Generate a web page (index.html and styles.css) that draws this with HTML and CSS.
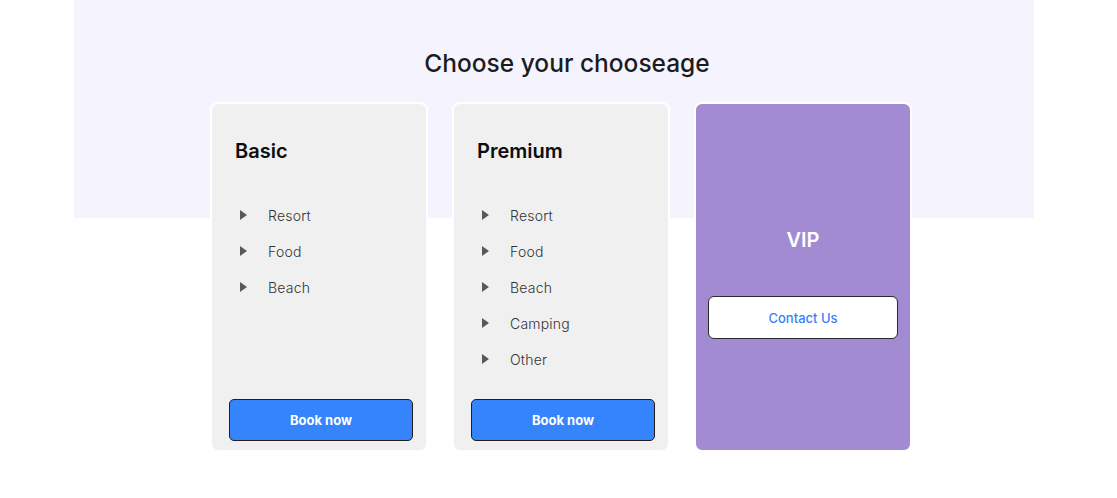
FILE: index.html
```html
<!DOCTYPE html>
<html lang="en">
<head>
<meta charset="utf-8">
<title>Choose your chooseage</title>
<link rel="stylesheet" href="styles.css">
</head>
<body>
<main class="pricing">
  <h2 class="pricing-title">Choose your chooseage</h2>
  <div class="cards">
    <section class="card">
      <h3 class="card-title">Basic</h3>
      <ul class="features">
        <li class="feature"><span class="tri"></span>Resort</li>
        <li class="feature"><span class="tri"></span>Food</li>
        <li class="feature"><span class="tri"></span>Beach</li>
      </ul>
      <button class="btn-book">Book now</button>
    </section>
    <section class="card">
      <h3 class="card-title">Premium</h3>
      <ul class="features">
        <li class="feature"><span class="tri"></span>Resort</li>
        <li class="feature"><span class="tri"></span>Food</li>
        <li class="feature"><span class="tri"></span>Beach</li>
        <li class="feature"><span class="tri"></span>Camping</li>
        <li class="feature"><span class="tri"></span>Other</li>
      </ul>
      <button class="btn-book">Book now</button>
    </section>
    <section class="card card-vip">
      <h3 class="vip-title">VIP</h3>
      <button class="btn-contact">Contact Us</button>
    </section>
  </div>
</main>
</body>
</html>
```

FILE: styles.css
```css
* { box-sizing: border-box; }

body {
  margin: 0;
  background: #ffffff;
  font-family: "Inter", "Open Sans", "Liberation Sans", sans-serif;
}

.pricing {
  width: 960px;
  margin-left: 74px;
  padding-top: 47px;
  background: linear-gradient(#f5f4fe, #f5f4fe) no-repeat;
  background-size: 960px 218px;
}

.pricing-title {
  margin: 0 0 23px;
  padding-left: 26px;
  text-align: center;
  font-size: 24.5px;
  line-height: 32px;
  font-weight: 500;
  color: #1c1c1c;
  letter-spacing: 0;
}

.cards {
  display: flex;
  gap: 24px;
  padding-left: 136px;
}

.card {
  width: 218px;
  height: 350px;
  border: 2px solid #ffffff;
  border-radius: 8px;
  background: #f0f0f0;
  display: flex;
  flex-direction: column;
  padding: 35px 13px 9px 17px;
}

.card-title {
  margin: 0 0 0 6px;
  font-size: 20px;
  line-height: 24px;
  font-weight: 600;
  color: #0d0d0d;
}

.features {
  list-style: none;
  margin: 34px 0 0;
  padding: 0 0 0 11px;
}

.feature {
  display: flex;
  align-items: center;
  height: 36px;
  font-size: 14px;
  font-weight: 300;
  color: #333333;
  letter-spacing: 0.2px;
}

.tri {
  width: 0;
  height: 0;
  border-top: 5.5px solid transparent;
  border-bottom: 5.5px solid transparent;
  border-left: 7px solid #595959;
  margin-right: 21px;
}

.btn-book {
  margin-top: auto;
  width: 184px;
  height: 42px;
  border: 1px solid #1f1f1f;
  border-radius: 5px;
  background: #3584fc;
  color: #ffffff;
  font-family: inherit;
  font-size: 13px;
  font-weight: 700;
}

.card-vip {
  background: #a28bd3;
  align-items: center;
  padding: 124px 0 0;
}

.vip-title {
  margin: 0;
  font-size: 20px;
  line-height: 24px;
  font-weight: 600;
  color: #ffffff;
}

.btn-contact {
  margin-top: 44px;
  width: 190px;
  height: 43px;
  border: 1px solid #2b2b2b;
  border-radius: 6px;
  background: #ffffff;
  color: #3b7ff5;
  font-family: inherit;
  font-size: 13px;
  font-weight: 500;
}
```
